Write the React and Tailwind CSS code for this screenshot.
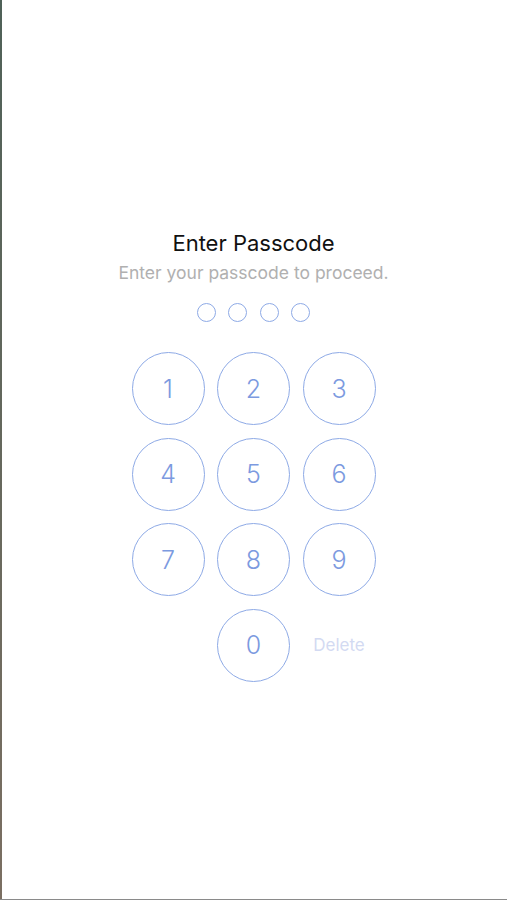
export default function App() {
  const keys = ["1", "2", "3", "4", "5", "6", "7", "8", "9"];

  return (
    <div className="relative w-[507px] h-[900px] bg-white overflow-hidden font-['Inter','Liberation_Sans',sans-serif]">
      {/* left edge strip */}
      <div className="absolute left-0 top-0 h-full w-[2px] bg-gradient-to-b from-[#4f6158] to-[#7b6f62]" />
      {/* bottom edge */}
      <div className="absolute left-0 bottom-0 w-full h-[1px] bg-[#8a8a8a]" />

      <div className="flex flex-col items-center pt-[229px]">
        <h1 className="text-[22px] leading-[28px] text-[#111] font-normal">Enter Passcode</h1>
        <p className="mt-[4px] text-[17.5px] leading-[24px] text-[#b0b0b0]">
          Enter your passcode to proceed.
        </p>

        {/* dots */}
        <div className="mt-[18px] flex gap-[12.5px]">
          {[0, 1, 2, 3].map((i) => (
            <div key={i} className="w-[19px] h-[19px] rounded-full border-[1.5px] border-[#8eaae6]" />
          ))}
        </div>

        {/* keypad */}
        <div className="mt-[30px] grid grid-cols-[73px_73px_73px] auto-rows-[73px] gap-[12.5px]">
          {keys.map((k) => (
            <button
              key={k}
              className="rounded-full border-[1.5px] border-[#8eaae6] flex items-center justify-center pt-[2px] text-[25px] font-light text-[#7c9ae0]"
            >
              {k}
            </button>
          ))}
          <div />
          <button className="rounded-full border-[1.5px] border-[#8eaae6] flex items-center justify-center pt-[2px] text-[25px] font-light text-[#7c9ae0]">
            0
          </button>
          <button className="flex items-center justify-center pt-[2px] text-[17px] text-[#d3daf2]">
            Delete
          </button>
        </div>
      </div>
    </div>
  );
}
